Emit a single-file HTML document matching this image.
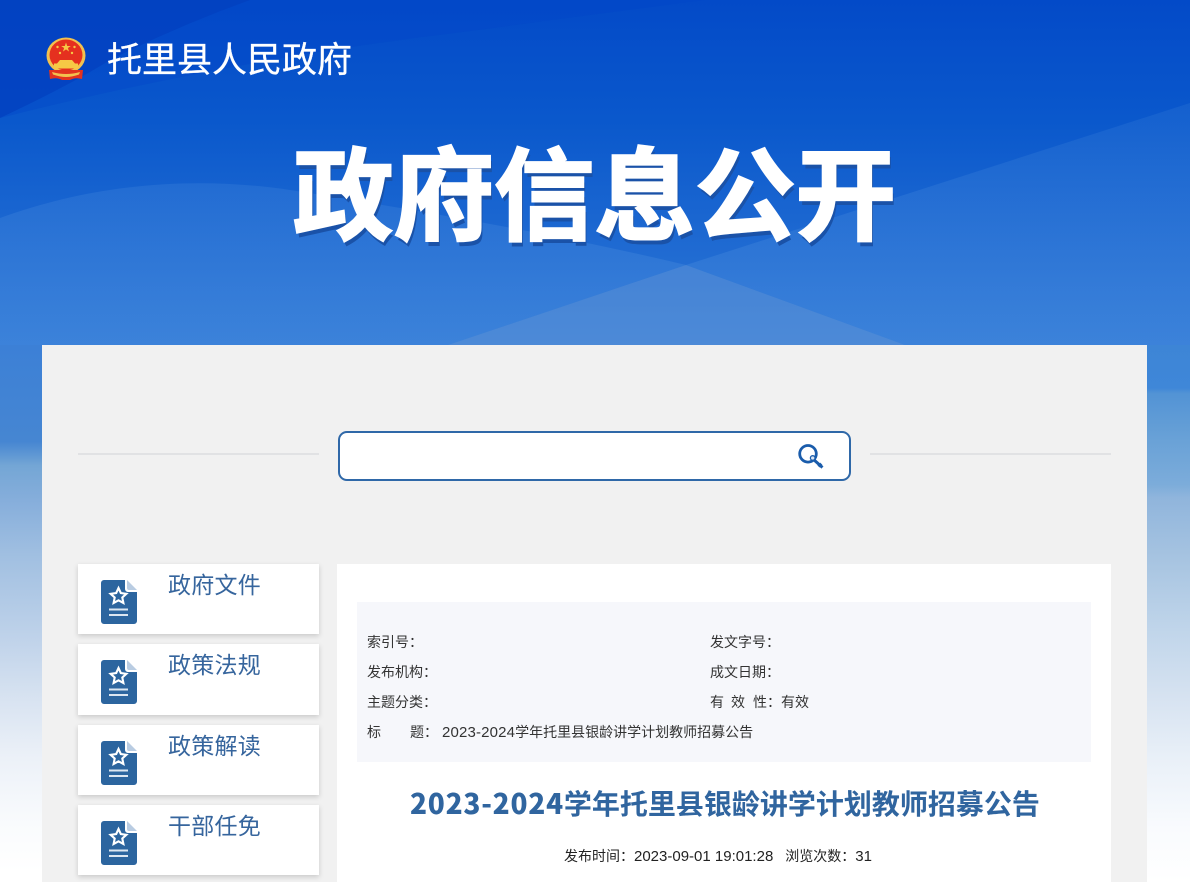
<!DOCTYPE html>
<html lang="zh-CN">
<head>
<meta charset="utf-8">
<title>托里县人民政府 - 政府信息公开</title>
<style>
*{margin:0;padding:0;box-sizing:border-box}
html,body{width:1190px;height:882px;overflow:hidden;background:#fff}
body{position:relative;font-family:"Liberation Sans","Noto Sans CJK SC",sans-serif;color:#333}
.bg{position:absolute;left:0;top:0;width:1190px;height:882px}
.abs{position:absolute;white-space:nowrap}
.site{left:107px;top:37px;font-size:35px;line-height:48px;color:#fff;-webkit-text-stroke:.3px #fff}
.big{left:293px;top:131px;font-size:100.5px;line-height:134px;width:620px;color:#fff;font-weight:700;-webkit-text-stroke:2.2px #fff;text-shadow:2px 5px 0 #1a52a8}
.panel{position:absolute;left:42px;top:345px;width:1105px;height:537px;background:#f1f1f1}
.line{position:absolute;height:2px;top:453px;width:241px;background:#e1e2e4}
.search{position:absolute;left:338px;top:431px;width:513px;height:50px;background:#fff;border:2px solid #2f68a8;border-radius:9px}
.item{position:absolute;left:78px;width:241px;background:#fff;box-shadow:0 2px 5px rgba(0,0,0,.17)}
.item svg{position:absolute;left:23px;top:16px}
.item span{position:absolute;left:90px;top:3px;font-size:23px;line-height:36px;letter-spacing:.25px;color:#36659d;white-space:nowrap}
.content{position:absolute;left:337px;top:564px;width:774px;height:318px;background:#fff}
.meta{position:absolute;left:357px;top:602px;width:734px;height:160px;background:#f6f7fb}
.m{position:absolute;font-size:14px;line-height:20px;white-space:nowrap;color:#333}
.m b{font-weight:400;font-size:15px;letter-spacing:.15px}
.title{position:absolute;left:410px;top:782px;font-size:28px;line-height:42px;font-weight:700;color:#30659f;white-space:nowrap}
.title b{font-family:"Noto Sans CJK SC",sans-serif;letter-spacing:.75px}
.info{position:absolute;left:564px;top:846px;font-size:14px;line-height:20px;color:#222;white-space:nowrap}
.info b{font-weight:400;font-size:15px}
</style>
</head>
<body>
<svg class="bg" viewBox="0 0 1190 882" xmlns="http://www.w3.org/2000/svg">
<defs>
<linearGradient id="g" gradientUnits="userSpaceOnUse" x1="0" y1="0" x2="0" y2="345">
<stop offset="0" stop-color="#034ac8"/>
<stop offset=".35" stop-color="#0a58cc"/>
<stop offset="1" stop-color="#2f78d6"/>
</linearGradient>
<linearGradient id="ov" gradientUnits="userSpaceOnUse" x1="0" y1="100" x2="0" y2="345">
<stop offset="0" stop-color="#5a9ae2" stop-opacity=".14"/>
<stop offset="1" stop-color="#5a9ae2" stop-opacity=".3"/>
</linearGradient>
<linearGradient id="l" gradientUnits="userSpaceOnUse" x1="0" y1="345" x2="0" y2="882">
<stop offset="0" stop-color="#3c80d6"/>
<stop offset=".18" stop-color="#4686d2"/>
<stop offset=".225" stop-color="#74a6d5"/>
<stop offset=".29" stop-color="#86aedb"/>
<stop offset=".39" stop-color="#a0bfe1"/>
<stop offset=".55" stop-color="#c0d3ea"/>
<stop offset=".66" stop-color="#d8e3f1"/>
<stop offset=".77" stop-color="#ecf1f8"/>
<stop offset=".89" stop-color="#f9fbfd"/>
<stop offset=".98" stop-color="#fff"/>
</linearGradient>
<linearGradient id="r" gradientUnits="userSpaceOnUse" x1="0" y1="345" x2="0" y2="882">
<stop offset="0" stop-color="#3d85d6"/>
<stop offset=".08" stop-color="#3f87d8"/>
<stop offset=".09" stop-color="#5293d5"/>
<stop offset=".18" stop-color="#6aa2d7"/>
<stop offset=".26" stop-color="#7cacda"/>
<stop offset=".285" stop-color="#90b5dc"/>
<stop offset=".40" stop-color="#a7c4e1"/>
<stop offset=".53" stop-color="#c0d5ea"/>
<stop offset=".66" stop-color="#d7e3f1"/>
<stop offset=".77" stop-color="#e9f0f8"/>
<stop offset=".90" stop-color="#f9fbfe"/>
<stop offset="1" stop-color="#fff"/>
</linearGradient>
</defs>
<rect width="1190" height="345" fill="url(#g)"/>
<path d="M0 118Q230 60 455 33Q590 15 705 0H0Z" fill="#0446c8" opacity=".35"/>
<path d="M0 118Q70 85 110 60Q180 25 250 0H0Z" fill="#0340bf" opacity=".75"/>
<path d="M0 218C90 185 190 175 290 190C430 212 560 235 686 265L448 345H0Z" fill="url(#ov)"/>
<path d="M686 265L1190 103V345H905Z" fill="url(#ov)"/>
<path d="M686 265L448 345H905Z" fill="#7fa9db" opacity=".38"/>
<rect x="0" y="345" width="42" height="537" fill="url(#l)"/>
<rect x="1147" y="345" width="43" height="537" fill="url(#r)"/>
</svg>

<svg class="abs" style="left:45px;top:37px" width="42" height="44" viewBox="0 0 42 44" xmlns="http://www.w3.org/2000/svg">
<ellipse cx="21" cy="18.500" rx="19.500" ry="18" fill="#f2c14e"/>
<ellipse cx="21" cy="18" rx="16.500" ry="15.500" fill="#e5301f"/>
<polygon points="21,5.500 22.200,9 25.800,9 22.900,11 24,14.500 21,12.400 18,14.500 19.100,11 16.200,9 19.800,9" fill="#f6c945"/>
<circle cx="12.500" cy="10" r="1.200" fill="#f6c945"/><circle cx="29.500" cy="10" r="1.200" fill="#f6c945"/>
<circle cx="15" cy="16" r="1.200" fill="#f6c945"/><circle cx="27" cy="16" r="1.200" fill="#f6c945"/>
<path d="M15 23H27L30 26.500H12Z" fill="#f6c945"/>
<rect x="9" y="26.500" width="24" height="5" fill="#f6c945"/>
<path d="M4 33H38L37 42Q30 40 25 43H17Q12 40 5 42Z" fill="#e2331f"/>
<path d="M7 35Q14 37 21 37Q28 37 35 35L34 37.500Q27 40 21 40Q15 40 8 37.500Z" fill="#f2c14e"/>
</svg>
<div class="abs site">托里县人民政府</div>
<div class="abs big">政府信息公开</div>

<div class="panel"></div>
<div class="line" style="left:78px"></div>
<div class="line" style="left:870px"></div>
<div class="search"></div>
<svg class="abs" style="left:797px;top:443px" width="28" height="28" viewBox="0 0 28 28" xmlns="http://www.w3.org/2000/svg">
<circle cx="11" cy="10.800" r="8.300" fill="none" stroke="#1a5cab" stroke-width="2.800"/>
<path d="M16 16L25.500 24.500M21.500 23.500L24.300 20.700" fill="none" stroke="#1a5cab" stroke-width="3"/>
<circle cx="15.700" cy="15" r="2.300" fill="#dbe6f3" stroke="#1a5cab" stroke-width="1.300"/>
</svg>

<div class="item" style="top:564px;height:70px"><svg width="36" height="44" viewBox="0 0 36 44" xmlns="http://www.w3.org/2000/svg"><path d="M3 0H24V9a3 3 0 0 0 3 3H36V41a3 3 0 0 1-3 3H3a3 3 0 0 1-3-3V3a3 3 0 0 1 3-3Z" fill="#2c659f"/><path d="M26 0L36 10H28a2 2 0 0 1-2-2Z" fill="#b9cce2"/><path d="M17.500 8L19.800 13L25.400 13.800L21.300 17.500L22.400 23L17.500 20.300L12.600 23L13.700 17.500L9.600 13.800L15.200 13Z" fill="none" stroke="#fff" stroke-width="2.100"/><path d="M8 29.500H27M8 35H27" stroke="#dce6f1" stroke-width="2"/></svg><span>政府文件</span></div>
<div class="item" style="top:644px;height:71px"><svg width="36" height="44" viewBox="0 0 36 44" xmlns="http://www.w3.org/2000/svg"><path d="M3 0H24V9a3 3 0 0 0 3 3H36V41a3 3 0 0 1-3 3H3a3 3 0 0 1-3-3V3a3 3 0 0 1 3-3Z" fill="#2c659f"/><path d="M26 0L36 10H28a2 2 0 0 1-2-2Z" fill="#b9cce2"/><path d="M17.500 8L19.800 13L25.400 13.800L21.300 17.500L22.400 23L17.500 20.300L12.600 23L13.700 17.500L9.600 13.800L15.200 13Z" fill="none" stroke="#fff" stroke-width="2.100"/><path d="M8 29.500H27M8 35H27" stroke="#dce6f1" stroke-width="2"/></svg><span>政策法规</span></div>
<div class="item" style="top:725px;height:70px"><svg width="36" height="44" viewBox="0 0 36 44" xmlns="http://www.w3.org/2000/svg"><path d="M3 0H24V9a3 3 0 0 0 3 3H36V41a3 3 0 0 1-3 3H3a3 3 0 0 1-3-3V3a3 3 0 0 1 3-3Z" fill="#2c659f"/><path d="M26 0L36 10H28a2 2 0 0 1-2-2Z" fill="#b9cce2"/><path d="M17.500 8L19.800 13L25.400 13.800L21.300 17.500L22.400 23L17.500 20.300L12.600 23L13.700 17.500L9.600 13.800L15.200 13Z" fill="none" stroke="#fff" stroke-width="2.100"/><path d="M8 29.500H27M8 35H27" stroke="#dce6f1" stroke-width="2"/></svg><span>政策解读</span></div>
<div class="item" style="top:805px;height:70px"><svg width="36" height="44" viewBox="0 0 36 44" xmlns="http://www.w3.org/2000/svg"><path d="M3 0H24V9a3 3 0 0 0 3 3H36V41a3 3 0 0 1-3 3H3a3 3 0 0 1-3-3V3a3 3 0 0 1 3-3Z" fill="#2c659f"/><path d="M26 0L36 10H28a2 2 0 0 1-2-2Z" fill="#b9cce2"/><path d="M17.500 8L19.800 13L25.400 13.800L21.300 17.500L22.400 23L17.500 20.300L12.600 23L13.700 17.500L9.600 13.800L15.200 13Z" fill="none" stroke="#fff" stroke-width="2.100"/><path d="M8 29.500H27M8 35H27" stroke="#dce6f1" stroke-width="2"/></svg><span>干部任免</span></div>

<div class="content"></div>
<div class="meta"></div>
<div class="m" style="left:367px;top:632px">索引号：</div>
<div class="m" style="left:710px;top:632px">发文字号：</div>
<div class="m" style="left:367px;top:662px">发布机构：</div>
<div class="m" style="left:710px;top:662px">成文日期：</div>
<div class="m" style="left:367px;top:692px">主题分类：</div>
<div class="m" style="left:710px;top:692px">有</div>
<div class="m" style="left:731px;top:692px">效</div>
<div class="m" style="left:753px;top:692px">性：</div>
<div class="m" style="left:781px;top:692px">有效</div>
<div class="m" style="left:367px;top:722px">标</div>
<div class="m" style="left:410px;top:722px">题：</div>
<div class="m" style="left:442px;top:722px"><b>2023-2024</b>学年托里县银龄讲学计划教师招募公告</div>
<div class="title"><b>2023-2024</b>学年托里县银龄讲学计划教师招募公告</div>
<div class="info">发布时间：<b>2023-09-01 19:01:28</b><span style="display:inline-block;width:12px"></span>浏览次数：<b>31</b></div>
</body>
</html>
